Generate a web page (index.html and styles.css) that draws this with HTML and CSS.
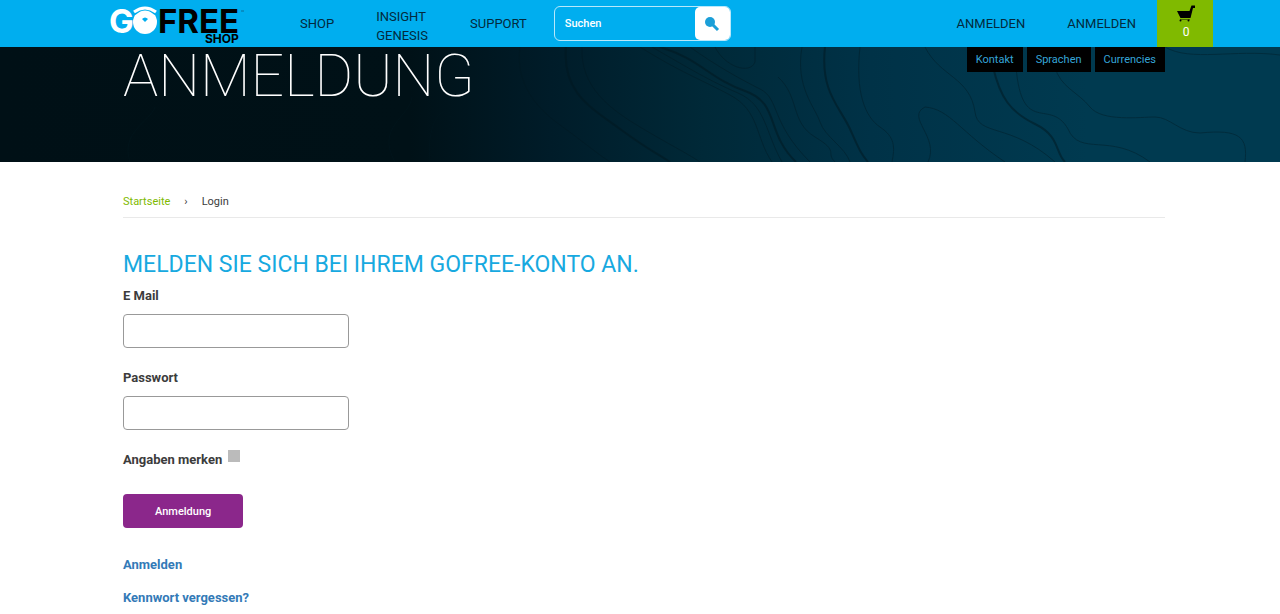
FILE: index.html
```
<!DOCTYPE html>
<html lang="de">
<head>
    <meta charset="UTF-8">
    <meta name="viewport" content="width=device-width, initial-scale=1.0">
    <title>Login | GoFree Shop</title>
    <link rel="stylesheet" href="styles.css">
</head>
<body>
    <header class="site-header">
        <a class="logo" href="#" aria-label="GoFree Shop">
            <svg width="136" height="47" viewBox="0 0 136 47">
                <text class="logo-go" x="0" y="33">G</text>
                <circle cx="36" cy="22" r="12" fill="#fff"/>
                <path d="M25 13 Q36 3 47 13" fill="none" stroke="#00aeef" stroke-width="5"/>
                <path d="M25 12 Q36 4 47 12" fill="none" stroke="#fff" stroke-width="3"/>
                <path d="M29 15 Q36 10 43 15" fill="none" stroke="#fff" stroke-width="2"/>
                <path d="M33 19 Q36 16 39 19 L36 22 Z" fill="#00aeef"/>
                <text class="logo-free" x="49" y="33">FREE</text>
                <text class="logo-shop" x="96" y="43">SHOP</text>
                <path d="M132 11 h3" stroke="#0a6f9a"/>
            </svg>
        </a>
        <nav class="main-nav">
            <a href="#">SHOP</a>
            <a class="two-line" href="#">INSIGHT<br>GENESIS</a>
            <a href="#">SUPPORT</a>
        </nav>
        <form class="search" role="search">
            <input type="text" placeholder="Suchen" aria-label="Suchen">
            <button type="submit" aria-label="Suchen">
                <svg width="16" height="16" viewBox="0 0 16 16">
                    <circle cx="6" cy="6" r="5" fill="#1b9fd8"/>
                    <path d="M8 8 L14 14" stroke="#1b9fd8" stroke-width="3"/>
                </svg>
            </button>
        </form>
        <nav class="main-nav account-nav">
            <a href="#">ANMELDEN</a>
            <a href="#">ANMELDEN</a>
        </nav>
        <a class="cart" href="#" aria-label="Warenkorb">
            <svg width="20" height="18" viewBox="0 0 20 18">
                <path d="M1 6 H13.500 L15.500 0.500 H19 V3 H17 L14.500 13 H4.500 Z" fill="#000"/>
                <path d="M4 14.500 H14" stroke="#4a6b00"/>
                <circle cx="4.500" cy="15.500" r="1"/>
                <circle cx="12.500" cy="15.500" r="1"/>
            </svg>
            <span>0</span>
        </a>
    </header>

    <div class="banner">
        <svg class="contours" viewBox="0 0 1280 115" preserveAspectRatio="xMidYMid slice" aria-hidden="true">
            <g class="thin">
                <path d="M520 0 C515 35 535 60 560 78 S595 105 610 115"/>
                <path d="M582 0 C580 40 610 62 640 80 S685 105 700 115"/>
                <path d="M640 0 C680 25 700 32 730 48 S755 90 772 115"/>
                <path d="M652 0 C690 22 710 34 738 46 S765 85 782 115"/>
                <path d="M690 0 C715 18 740 32 760 42 S770 75 810 115"/>
                <path d="M715 0 C725 20 750 28 755 15 V0"/>
                <path d="M778 30 C800 50 790 75 815 90 S825 105 835 115"/>
                <path d="M802 0 C795 40 815 60 820 75 S845 100 850 115"/>
                <path d="M860 0 C855 45 865 70 880 80 S895 100 892 115"/>
                <path d="M925 0 C940 30 970 30 975 65 C978 90 1010 75 1055 115"/>
                <path d="M928 115 C940 90 905 70 925 60 C950 62 960 85 1005 115"/>
                <path d="M1016 20 C1022 90 1050 50 1068 82 C1080 110 1110 85 1150 115"/>
                <path d="M1055 20 C1060 40 1078 45 1090 60 S1140 70 1155 70 S1180 86 1200 86 C1240 82 1248 90 1245 115"/>
                <path d="M1165 0 C1190 15 1235 2 1280 8"/>
                <path d="M130 115 C120 85 150 75 155 60"/>
                <path d="M395 115 C375 80 410 70 412 50"/>
                <path d="M430 115 C425 70 450 45 455 85"/>
            </g>
            <g class="thick">
                <path d="M566 0 C562 45 590 60 620 82 S655 105 670 115"/>
                <path d="M660 0 C700 12 710 32 745 44 S765 85 796 115"/>
                <path d="M825 0 C820 45 840 60 850 82 S860 105 868 115"/>
                <path d="M993 20 C1000 50 1010 65 1035 77 S1055 105 1065 115"/>
            </g>
        </svg>
        <div class="banner-inner">
            <h1>ANMELDUNG</h1>
            <nav class="utility-nav">
                <a href="#">Kontakt</a>
                <a href="#">Sprachen</a>
                <a href="#">Currencies</a>
            </nav>
        </div>
    </div>

    <main class="content">
        <nav class="breadcrumb">
            <a href="#">Startseite</a>
            <span class="separator">›</span>
            <span>Login</span>
        </nav>

        <h2>MELDEN SIE SICH BEI IHREM GOFREE-KONTO AN.</h2>

        <form class="login-form">
            <label for="email">E Mail</label>
            <input type="text" id="email">
            <label for="password">Passwort</label>
            <input type="password" id="password">
            <div class="remember">
                <label for="remember">Angaben merken</label>
                <input type="checkbox" id="remember">
            </div>
            <button type="submit">Anmeldung</button>
        </form>

        <div class="form-links">
            <a href="#">Anmelden</a>
            <a href="#">Kennwort vergessen?</a>
        </div>
    </main>
</body>
</html>
```
FILE: styles.css
```
* {
    box-sizing: border-box;
}
body {
    margin: 0;
    font-family: Roboto, Arial, sans-serif;
    font-size: 13px;
    line-height: 20px;
    color: #3c3c3c;
    background: #fff;
}
a {
    text-decoration: none;
}
input, button {
    font-family: inherit;
}

/* Header */
.site-header {
    display: flex;
    align-items: center;
    min-height: 47px;
    padding: 0 67px 0 109px;
    background: #00aeef;
}
.logo {
    display: flex;
    margin-right: 34px;
}
.logo-go, .logo-free, .logo-shop {
    font-family: Inter, sans-serif;
    font-weight: 700;
    font-size: 33px;
}
.logo-go {
    fill: #fff;
}
.logo-shop {
    font-size: 12px;
}
.main-nav {
    display: flex;
    align-items: center;
}
.main-nav a {
    padding: 0 21px;
    line-height: 19px;
    color: #032a3c;
}
.main-nav .two-line {
    padding-top: 5px;
}
.main-nav a:hover {
    color: #fff;
}
.account-nav {
    margin-left: auto;
}
.search {
    display: flex;
    width: 177px;
    height: 35px;
    margin-left: 6px;
    border: 1px solid #b8e8fb;
    border-radius: 6px;
}
.search input {
    flex: 1;
    min-width: 0;
    padding: 0 10px;
    border: none;
    background: transparent;
    font-size: 11px;
    font-weight: 500;
    color: #fff;
}
.search input::placeholder {
    color: #fff;
    opacity: 1;
}
.search button {
    display: flex;
    align-items: center;
    justify-content: center;
    width: 35px;
    padding: 0;
    border: none;
    border-radius: 5px;
    background: #fff;
    cursor: pointer;
}
.cart {
    display: flex;
    flex-direction: column;
    align-items: center;
    align-self: stretch;
    width: 56px;
    padding: 5px 0 6px 2px;
    background: #80ba00;
    font-size: 12px;
    line-height: 18px;
    color: #fff;
}

/* Banner */
.banner {
    position: relative;
    background: linear-gradient(90deg, #001016 0%, #001117 32%, #001c29 43%, #002938 55%, #003247 68%, #003a50 85%, #003a50 100%);
}
.contours {
    position: absolute;
    width: 100%;
    height: 100%;
    fill: none;
    stroke: #001820;
}
.thin {
    stroke-width: 1;
    opacity: 0.4;
}
.thick {
    stroke-width: 2;
    opacity: 0.5;
}
.banner-inner {
    position: relative;
    display: flex;
    justify-content: space-between;
    align-items: flex-start;
    padding: 0 115px 57px 123px;
}
h1 {
    margin: 0;
    font-size: 59px;
    line-height: 58px;
    font-weight: 100;
    color: #fff;
}
.utility-nav {
    display: flex;
    gap: 4px;
}
.utility-nav a {
    padding: 3px 9px 2px;
    background: #000;
    font-size: 11px;
    color: #35a5d8;
}

/* Page content */
.content {
    padding: 30px 115px 0 123px;
}
.breadcrumb {
    display: flex;
    padding-bottom: 5px;
    border-bottom: 1px solid #e9e9e9;
    font-size: 11px;
}
.breadcrumb a {
    color: #80ba00;
}
.breadcrumb .separator {
    padding: 0 14px;
}
h2 {
    margin: 32px 0 6px;
    font-size: 23px;
    line-height: 30px;
    font-weight: 400;
    color: #17a9e0;
}
.login-form {
    display: flex;
    flex-direction: column;
    align-items: flex-start;
}
.login-form label {
    font-weight: 700;
}
.login-form > input {
    width: 226px;
    height: 34px;
    margin: 8px 0 20px;
    padding: 6px 12px;
    border: 1px solid #999;
    border-radius: 4px;
}
.remember {
    display: flex;
    gap: 6px;
}
.remember input {
    appearance: none;
    width: 12px;
    height: 12px;
    margin: 0;
    background: #bbb;
}
.remember input:checked {
    background: #8b278b;
}
.login-form button {
    height: 34px;
    margin-top: 24px;
    padding: 0 32px;
    border: none;
    border-radius: 4px;
    background: #8b278b;
    font-size: 11px;
    font-weight: 500;
    color: #fff;
    cursor: pointer;
}
.form-links {
    display: flex;
    flex-direction: column;
    align-items: flex-start;
    gap: 13px;
    padding-top: 27px;
}
.form-links a {
    font-weight: 700;
    color: #337ab7;
}
.form-links a:hover {
    text-decoration: underline;
}
```
